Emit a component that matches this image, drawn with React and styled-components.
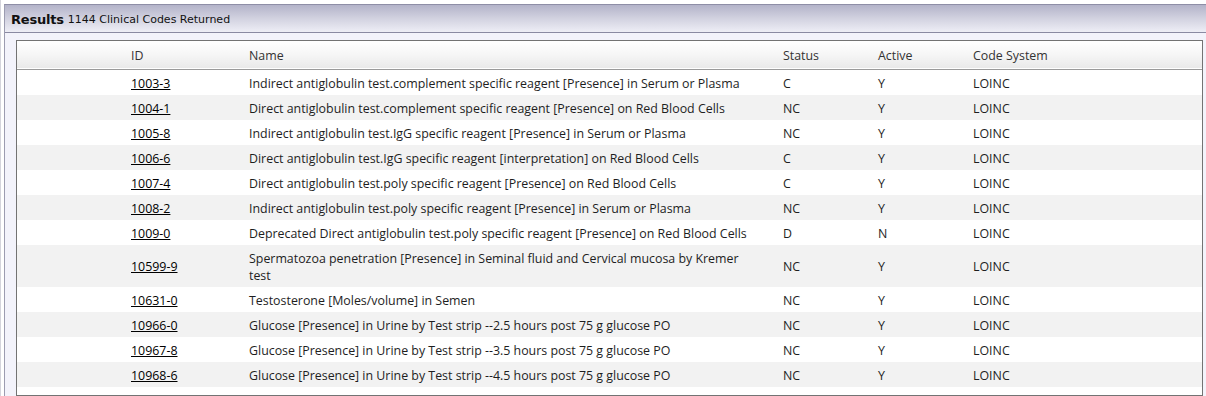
import React from 'react';
import styled, { createGlobalStyle } from 'styled-components';

const GlobalStyle = createGlobalStyle`
  html, body {
    margin: 0;
    padding: 0;
    background: #fff;
  }
`;

const Page = styled.div`
  width: 1206px;
  height: 396px;
  overflow: hidden;
  box-sizing: border-box;
  padding: 4px 0 0 3px;
  border-left: 1px solid #d4d4dc;
`;

const Panel = styled.div`
  border-top: 1px solid #8e8ea6;
  border-left: 1px solid #9c9cb0;
  background: #f3f3fb;
  height: 100%;
`;

const PanelHeader = styled.div`
  height: 28px;
  box-sizing: border-box;
  display: flex;
  align-items: center;
  padding: 1px 0 0 6px;
  background: linear-gradient(to bottom, #b3b3c9 0%, #d2d2e0 50%, #eeeef6 100%);
  border-bottom: 1px solid #8a8aa2;
  font-family: 'DejaVu Sans', Tahoma, sans-serif;
  color: #111;
`;

const Title = styled.span`
  font-weight: bold;
  font-size: 13px;
  letter-spacing: -0.2px;
`;

const Count = styled.span`
  font-size: 11px;
  margin-left: 4px;
  margin-top: 1px;
`;

const TableBox = styled.div`
  margin: 7px 3px 0 11px;
  height: 356px;
  box-sizing: border-box;
  border: 1px solid #737373;
  background: #fff;
`;

const Table = styled.table`
  width: 100%;
  border-collapse: collapse;
  table-layout: fixed;
  font-family: 'Open Sans', 'Noto Sans', sans-serif;
  font-size: 12.4px;
  color: #1e1e1e;
`;

const HeadRow = styled.tr`
  background: linear-gradient(to bottom, #ffffff 0%, #f6f6f6 50%, #e9e9e9 100%);
  border-bottom: 1px solid #9a9a9a;
`;

const Th = styled.th`
  font-weight: normal;
  text-align: left;
  height: 28px;
  padding: 2px 0 0 ${(p) => p.$pad || 8}px;
  box-sizing: border-box;
  color: #333;
`;

const Row = styled.tr`
  background: ${(p) => (p.$odd ? '#f2f2f2' : '#fff')};
`;

const Td = styled.td`
  padding: 5px ${(p) => p.$rpad || 8}px 3px ${(p) => p.$pad || 8}px;
  line-height: 17px;
  vertical-align: middle;
`;

const CodeLink = styled.a`
  color: #000;
  text-decoration: underline;
  cursor: pointer;
`;

const rows = [
  ['1003-3', 'Indirect antiglobulin test.complement specific reagent [Presence] in Serum or Plasma', 'C', 'Y'],
  ['1004-1', 'Direct antiglobulin test.complement specific reagent [Presence] on Red Blood Cells', 'NC', 'Y'],
  ['1005-8', 'Indirect antiglobulin test.IgG specific reagent [Presence] in Serum or Plasma', 'NC', 'Y'],
  ['1006-6', 'Direct antiglobulin test.IgG specific reagent [interpretation] on Red Blood Cells', 'C', 'Y'],
  ['1007-4', 'Direct antiglobulin test.poly specific reagent [Presence] on Red Blood Cells', 'C', 'Y'],
  ['1008-2', 'Indirect antiglobulin test.poly specific reagent [Presence] in Serum or Plasma', 'NC', 'Y'],
  ['1009-0', 'Deprecated Direct antiglobulin test.poly specific reagent [Presence] on Red Blood Cells', 'D', 'N'],
  ['10599-9', 'Spermatozoa penetration [Presence] in Seminal fluid and Cervical mucosa by Kremer test', 'NC', 'Y'],
  ['10631-0', 'Testosterone [Moles/volume] in Semen', 'NC', 'Y'],
  ['10966-0', 'Glucose [Presence] in Urine by Test strip --2.5 hours post 75 g glucose PO', 'NC', 'Y'],
  ['10967-8', 'Glucose [Presence] in Urine by Test strip --3.5 hours post 75 g glucose PO', 'NC', 'Y'],
  ['10968-6', 'Glucose [Presence] in Urine by Test strip --4.5 hours post 75 g glucose PO', 'NC', 'Y'],
];

const App = () => {
  return (
    <Page>
      <GlobalStyle />
      <Panel>
        <PanelHeader>
          <Title>Results</Title>
          <Count>1144 Clinical Codes Returned</Count>
        </PanelHeader>
        <TableBox>
          <Table>
            <colgroup>
              <col style={{ width: 224 }} />
              <col style={{ width: 534 }} />
              <col style={{ width: 95 }} />
              <col style={{ width: 95 }} />
              <col />
            </colgroup>
            <thead>
              <HeadRow>
                <Th $pad={114}>ID</Th>
                <Th>Name</Th>
                <Th>Status</Th>
                <Th>Active</Th>
                <Th>Code System</Th>
              </HeadRow>
            </thead>
            <tbody>
              {rows.map(([id, name, status, active], i) => (
                <Row key={id} $odd={i % 2 === 1}>
                  <Td $pad={114}>
                    <CodeLink>{id}</CodeLink>
                  </Td>
                  <Td $rpad={14}>{name}</Td>
                  <Td>{status}</Td>
                  <Td>{active}</Td>
                  <Td>LOINC</Td>
                </Row>
              ))}
            </tbody>
          </Table>
        </TableBox>
      </Panel>
    </Page>
  );
};

export default App;
